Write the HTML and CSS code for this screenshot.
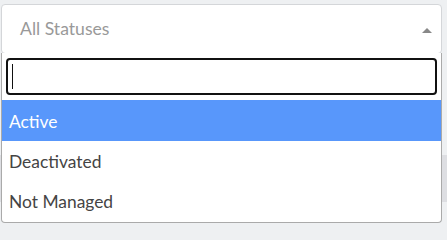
FILE: index.html
```html
<!DOCTYPE html>
<html>
<head>
<meta charset="utf-8">
<link rel="stylesheet" href="styles.css">
</head>
<body>
<div class="page">
  <div class="toolbar">
    <div class="select">
      <span class="placeholder">All Statuses</span>
      <span class="arrow"></span>
    </div>
  </div>
  <div class="content">
    <div class="gap"></div>
    <div class="band"></div>
  </div>
  <div class="dropdown">
    <div class="search"><div class="field"><span class="caret"></span></div></div>
    <ul class="options">
      <li class="option highlighted">Active</li>
      <li class="option">Deactivated</li>
      <li class="option">Not Managed</li>
    </ul>
  </div>
</div>
</body>
</html>
```

FILE: styles.css
```css
html, body {
  margin: 0;
  padding: 0;
  overflow: hidden;
}
html {
  width: 447px;
  height: 224px;
}
body {
  background: #eef0f2;
  font-family: Lato, "Open Sans", sans-serif;
  width: 447px;
  height: 224px;
}
.page {
  position: relative;
  height: 224px;
  overflow: hidden;
}
.toolbar {
  padding: 4px 5px 0 1px;
}
.select {
  box-sizing: border-box;
  width: 441px;
  height: 50px;
  background: #fff;
  border: 1px solid #d4d6d9;
  border-radius: 4px;
  display: flex;
  align-items: center;
  padding: 0 9px 0 18px;
}
.placeholder {
  flex: 1;
  color: #999;
  font-size: 17.6px;
  margin-top: -2px;
}
.arrow {
  width: 0;
  height: 0;
  border-left: 5px solid transparent;
  border-right: 5px solid transparent;
  border-bottom: 5px solid #888;
  margin-top: 2px;
}
.content {
  display: flex;
  flex-direction: column;
}
.gap {
  height: 101px;
  flex: none;
}
.band {
  height: 47px;
  flex: none;
  background: #dddee2;
}
.dropdown {
  position: absolute;
  top: 53px;
  left: 1px;
  box-sizing: border-box;
  width: 441px;
  height: 170px;
  background: #fff;
  border: 1px solid #aaa;
  border-top: none;
  border-radius: 0 0 4px 4px;
}
.search {
  padding: 5px 4px 5px 4px;
}
.field {
  box-sizing: border-box;
  height: 37px;
  border: 2px solid #111;
  border-radius: 4px;
  display: flex;
  align-items: center;
  padding-left: 4px;
}
.caret {
  width: 1px;
  height: 25px;
  background: #111;
}
.options {
  list-style: none;
  margin: 0;
  padding: 0;
}
.option {
  height: 40px;
  line-height: 41px;
  padding-left: 7px;
  font-size: 17.4px;
  color: #444;
}
.option.highlighted {
  background: #5897fb;
  color: #fff;
  height: 41px;
  line-height: 43px;
}
```
